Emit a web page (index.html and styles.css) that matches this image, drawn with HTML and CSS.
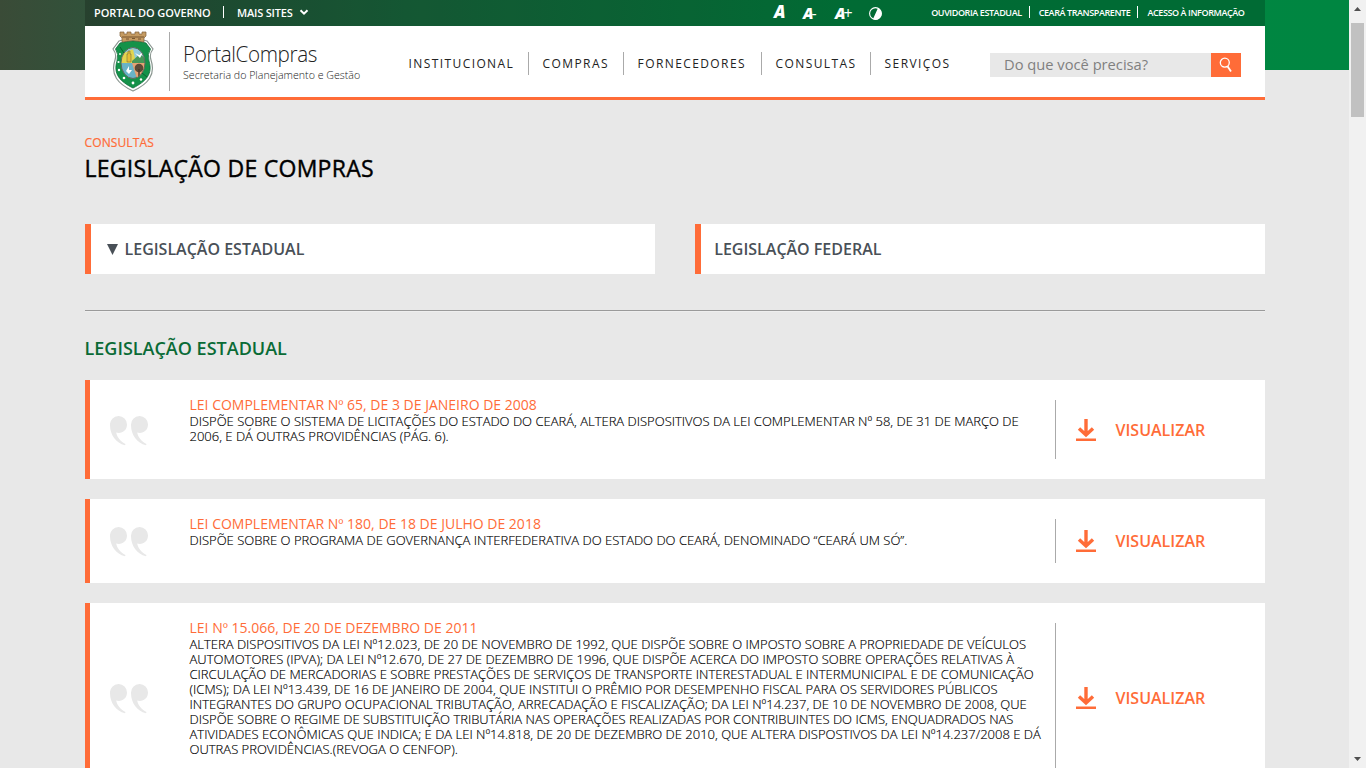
FILE: index.html
```html
<!DOCTYPE html>
<html lang="pt-BR">
<head>
<meta charset="utf-8">
<title>Legislação de Compras - PortalCompras</title>
<link rel="stylesheet" href="styles.css">
</head>
<body>
<svg class="defs" width="0" height="0">
  <symbol id="quote" viewBox="0 0 38 30"><path d="M8.500 0A8.500 8.500 0 0 0 0 9C0 19 6 27 15 29.300L15.500 28C10.500 25.500 7 21.500 6.200 16.600C12 18 17 14.500 17 8.500A8.400 8.400 0 0 0 8.500 0ZM29.500 0A8.500 8.500 0 0 0 21 9C21 19 27 27 36 29.300L36.500 28C31.500 25.500 28 21.500 27.200 16.600C33 18 38 14.500 38 8.500A8.400 8.400 0 0 0 29.500 0Z"/></symbol>
  <symbol id="download" viewBox="0 0 20 22"><path d="M10 0V16M3 9.500L10 16L17 9.500" fill="none" stroke="currentColor" stroke-width="3.400"/><path d="M0 19.500H20V22H0Z" fill="currentColor"/></symbol>
</svg>
<div class="page">
  <header class="band">
    <div class="container">
      <div class="topbar">
        <a class="gov">PORTAL DO GOVERNO</a><i class="bar bar-gov"></i><a class="sites">MAIS SITES</a>
        <svg class="chev" width="10" height="7" viewBox="0 0 10 7"><path d="M1.500 1.200L5 4.700L8.500 1.200" fill="none" stroke="#fff" stroke-width="2"/></svg>
        <div class="access">
          <span class="a1">A</span><span class="a2">A<b>-</b></span><span class="a3">A<b>+</b></span>
          <svg width="13" height="13" viewBox="0 0 13 13"><circle cx="6.500" cy="6.500" r="5.900" fill="none" stroke="#fff" stroke-width="1.100"/><path d="M9 1Q12.500 3 12.500 6.500A6 6 0 0 1 4 12.100Z" fill="#fff"/></svg>
        </div>
        <div class="links"><a class="l1">OUVIDORIA ESTADUAL</a><i class="bar"></i><a class="l2">CEARÁ TRANSPARENTE</a><i class="bar"></i><a class="l3">ACESSO À INFORMAÇÃO</a></div>
      </div>
      <div class="mainbar">
        <svg class="crest" width="42" height="62" viewBox="0 0 42 62">
          <path d="M7 10Q21 5 35 10L41 18Q37 23 39 29C44 44 36 53 21 60C6 53 -2 44 3 29Q5 23 1 18Z" fill="#fff" stroke="#8b9791" stroke-width="1.200"/>
          <path d="M8 12Q21 8 34 12L38.500 18Q35 23 37 30C41 43 34 50.500 21 57C8 50.500 1 43 5 30Q7 23 3.500 18Z" fill="#149249" stroke="#0d6b38" stroke-width=".8"/>
          <path d="M8 1H12V3H15V1H19V3H23V1H27V3H30V1H34V5L32 7V11Q21 8 10 11V7L8 5Z" fill="#c59b62" stroke="#80603a" stroke-width=".7"/>
          <path d="M10 6H32M14 8H17M20 7.500H23M26 8H29" stroke="#76552f" stroke-width="1"/>
          <clipPath id="oval"><ellipse cx="21" cy="32" rx="12" ry="15.500"/></clipPath>
          <g clip-path="url(#oval)"><path d="M8 16H34V33H8Z" fill="#91c9dc"/><path d="M8 24L21 18L24 32H8Z" fill="#e2d44e"/><path d="M20 30L28 23L34 28V32H20Z" fill="#489759"/><path d="M8 32H21L25 48H8Z" fill="#69b3c7"/><path d="M20 32H34V48H25Z" fill="#e6a273"/><path d="M15 31V23H16V20H18V23H19V31Z" fill="#e5be37" stroke="#776f42" stroke-width=".6"/><path d="M23 22L27 24L32 20L28 27Z" fill="#fff"/><path d="M14 40L17 35V39H20L17 43Z" fill="#fff"/><circle cx="27" cy="37" r="4.300" fill="#5c4936"/><path d="M27 38V46" stroke="#4b3827" stroke-width="1.500"/></g>
          <ellipse cx="21" cy="32" rx="12" ry="15.500" fill="none" stroke="#60675a" stroke-width="1"/>
          <path d="M8 16L12 22M30 42L35 46" stroke="#0c6032" stroke-width="1"/>
          <g fill="#fff"><circle cx="8" cy="23" r=".9"/><circle cx="6.500" cy="31" r="1.100"/><circle cx="7" cy="39" r="1.200"/><circle cx="12" cy="47" r="1.300"/><circle cx="21" cy="52" r="1.400"/><circle cx="29" cy="48.500" r="1.200"/></g>
        </svg>
        <i class="logo-line"></i>
        <div class="brand"><div class="brand-name">PortalCompras</div><div class="brand-sub">Secretaria do Planejamento e Gestão</div></div>
        <nav class="menu"><a class="m1">INSTITUCIONAL</a><a class="m2">COMPRAS</a><a class="m3">FORNECEDORES</a><a class="m4">CONSULTAS</a><a class="m5">SERVIÇOS</a></nav>
        <div class="search"><span>Do que você precisa?</span><div class="search-btn"><svg width="14" height="16" viewBox="0 0 14 16"><circle cx="5.800" cy="5.600" r="4.500" fill="none" stroke="#fff" stroke-width="1.300"/><path d="M8.500 9.300L12 14.600" stroke="#fff" stroke-width="1.800"/></svg></div></div>
      </div>
    </div>
  </header>
  <main class="container content">
    <div class="crumb">CONSULTAS</div>
    <h1>LEGISLAÇÃO DE COMPRAS</h1>
    <div class="tabs">
      <div class="tab"><svg width="11" height="11" viewBox="0 0 11 11"><path d="M0 0H11L5.500 11Z" fill="#495057"/></svg><span class="t1">LEGISLAÇÃO ESTADUAL</span></div>
      <div class="tab"><span class="t2">LEGISLAÇÃO FEDERAL</span></div>
    </div>
    <hr>
    <h2>LEGISLAÇÃO ESTADUAL</h2>
    <article class="card">
      <svg class="quote"><use href="#quote"/></svg>
      <div class="text"><h3>LEI COMPLEMENTAR Nº 65, DE 3 DE JANEIRO DE 2008</h3>
      <p>DISPÕE SOBRE O SISTEMA DE LICITAÇÕES DO ESTADO DO CEARÁ, ALTERA DISPOSITIVOS DA LEI COMPLEMENTAR Nº 58, DE 31 DE MARÇO DE<br>2006, E DÁ OUTRAS PROVIDÊNCIAS (PÁG. 6).</p></div>
      <a class="view"><svg class="dl"><use href="#download"/></svg><span>VISUALIZAR</span></a>
    </article>
    <article class="card">
      <svg class="quote"><use href="#quote"/></svg>
      <div class="text"><h3>LEI COMPLEMENTAR Nº 180, DE 18 DE JULHO DE 2018</h3>
      <p>DISPÕE SOBRE O PROGRAMA DE GOVERNANÇA INTERFEDERATIVA DO ESTADO DO CEARÁ, DENOMINADO “CEARÁ UM SÓ”.</p></div>
      <a class="view"><svg class="dl"><use href="#download"/></svg><span>VISUALIZAR</span></a>
    </article>
    <article class="card">
      <svg class="quote"><use href="#quote"/></svg>
      <div class="text"><h3>LEI Nº 15.066, DE 20 DE DEZEMBRO DE 2011</h3>
      <p>ALTERA DISPOSITIVOS DA LEI Nº12.023, DE 20 DE NOVEMBRO DE 1992, QUE DISPÕE SOBRE O IMPOSTO SOBRE A PROPRIEDADE DE VEÍCULOS<br>AUTOMOTORES (IPVA); DA LEI Nº12.670, DE 27 DE DEZEMBRO DE 1996, QUE DISPÕE ACERCA DO IMPOSTO SOBRE OPERAÇÕES RELATIVAS À<br>CIRCULAÇÃO DE MERCADORIAS E SOBRE PRESTAÇÕES DE SERVIÇOS DE TRANSPORTE INTERESTADUAL E INTERMUNICIPAL E DE COMUNICAÇÃO<br>(ICMS); DA LEI Nº13.439, DE 16 DE JANEIRO DE 2004, QUE INSTITUI O PRÊMIO POR DESEMPENHO FISCAL PARA OS SERVIDORES PÚBLICOS<br>INTEGRANTES DO GRUPO OCUPACIONAL TRIBUTAÇÃO, ARRECADAÇÃO E FISCALIZAÇÃO; DA LEI Nº14.237, DE 10 DE NOVEMBRO DE 2008, QUE<br>DISPÕE SOBRE O REGIME DE SUBSTITUIÇÃO TRIBUTÁRIA NAS OPERAÇÕES REALIZADAS POR CONTRIBUINTES DO ICMS, ENQUADRADOS NAS<br>ATIVIDADES ECONÔMICAS QUE INDICA; E DA LEI Nº14.818, DE 20 DE DEZEMBRO DE 2010, QUE ALTERA DISPOSTIVOS DA LEI Nº14.237/2008 E DÁ<br>OUTRAS PROVIDÊNCIAS.(REVOGA O CENFOP).</p></div>
      <a class="view"><svg class="dl"><use href="#download"/></svg><span>VISUALIZAR</span></a>
    </article>
  </main>
</div>
<aside class="scroll">
  <svg width="7" height="4" viewBox="0 0 7 4"><path d="M0 4L3.500 0L7 4Z" fill="#505050"/></svg>
  <div class="thumb"></div>
  <svg class="down" width="7" height="4" viewBox="0 0 7 4"><path d="M0 0H7L3.500 4Z" fill="#505050"/></svg>
</aside>
</body>
</html>
```
FILE: styles.css
```css
* { box-sizing: border-box; margin: 0; padding: 0; }
html, body { height: 768px; overflow: hidden; }
body { display: flex; font-family: "Open Sans", sans-serif; background: #e8e8e8; white-space: nowrap; }
.defs { position: absolute; }
.page { width: 1349px; height: 768px; overflow: hidden; }
.container { width: 1180px; margin-left: 84.5px; }
.band { height: 70px; background: linear-gradient(90deg, #3a4b37 0, #29583d 12%, #1a6d40 30%, #028641 62%, #008641 100%); }
.topbar { display: flex; align-items: center; height: 26px; padding: 0 20px 2px 9.5px; background: rgba(0,0,0,.2); color: #fff; font-size: 11px; font-weight: 600; }
.bar { width: 1px; height: 12px; background: #fff; }
.bar-gov { margin: 0 13px 0 12px; }
.gov { width: 117px; letter-spacing: -.1px; }
.sites { width: 57px; letter-spacing: -.2px; }
.chev { margin-left: 5px; }
.access { display: flex; align-items: center; margin-left: 465px; height: 24px; font-size: 17px; font-weight: 800; font-style: italic; line-height: 24px; }
.access b { font-weight: 400; font-style: normal; font-size: 16px; margin-left: -2px; }
.a1 { width: 29px; }
.a2, .a3 { padding-top: 2px; font-size: 15.5px; }
.a2 { width: 32px; }
.a3 { width: 34px; }
.access svg { margin-top: 3px; }
.links { display: flex; align-items: center; margin-left: auto; font-size: 9px; letter-spacing: -.4px; }
.links .bar { margin: 0 9px 0 7px; }
.mainbar { display: flex; height: 74px; background: #fff; border-bottom: 3px solid #ff6c38; }
.crest { margin: 5px 0 0 27.5px; }
.logo-line { width: 1px; height: 59px; margin: 6px 0 0 15px; background: #aaa; }
.brand { width: 225px; padding: 15px 0 0 12.7px; color: #222; font-weight: 300; }
.brand-name { font-size: 22.5px; line-height: 25px; letter-spacing: -.4px; transform: scaleX(.918); transform-origin: left; }
.brand-sub { font-size: 11.5px; line-height: 17px; transform: scaleX(.925); transform-origin: left; }
.menu { display: flex; height: 23px; margin-top: 26px; line-height: 23px; font-size: 12px; letter-spacing: 1.4px; color: #222; }
.menu a { padding-left: 13.6px; border-right: 1px solid #aaa; }
.m1 { width: 134px; }
.m2 { width: 95px; }
.m3 { width: 138px; }
.m4 { width: 109px; }
.menu .m5 { border: 0; }
.search { display: flex; width: 251px; height: 24px; margin: 27px 24px 0 auto; background: #e8e8e8; color: #808080; font-size: 14.7px; line-height: 23px; padding-left: 14.5px; }
.search-btn { width: 30px; margin-left: auto; background: #ff6c38; padding: 4px 0 0 8px; line-height: 0; }
.content { padding-top: 64px; }
.crumb { font-size: 12px; line-height: 18px; letter-spacing: .12px; color: #ff6c38; -webkit-text-stroke: .2px #ff6c38; }
h1 { font-size: 23px; line-height: 32px; font-weight: 400; letter-spacing: .27px; -webkit-text-stroke: .4px #000; color: #000; }
.tabs { display: grid; grid-template-columns: 570px 570px; gap: 40px; margin-top: 40px; }
.tab { display: flex; align-items: center; height: 50px; padding-left: 13px; border-left: 6px solid #ff6c38; background: #fff; font-size: 16px; font-weight: 600; color: #495057; }
.tab svg { margin: 0 7px 0 3px; }
.t2 { padding-left: .7px; }
hr { height: 2px; margin-top: 36px; border: 0; border-top: 1px solid #9a9a9a; border-bottom: 1px solid #eee; }
h2 { margin: 23px 0 19px; font-size: 18px; line-height: 26px; font-weight: 600; color: #0a6b36; }
.card { display: flex; align-items: center; border-left: 5px solid #ff6c38; background: #fff; margin-bottom: 20px; }
.quote { width: 38px; height: 30px; margin-left: 20.5px; fill: #e8e8e8; margin-top: 2px; }
.text { width: 865px; margin-left: 41.5px; padding: 16px 0 35px; }
h3 { font-size: 14px; line-height: 17px; font-weight: 400; color: #ff6c38; }
.text p { margin-top: 1px; font-size: 13px; line-height: 15px; font-weight: 300; color: #000; -webkit-text-stroke: .15px #000; }
.view { display: flex; align-items: center; align-self: stretch; margin: 20px 0; padding-left: 20.5px; border-left: 1px solid #aaa; color: #ff6c38; font-size: 16px; font-weight: 600; }
.dl { width: 20px; height: 22px; margin-right: 19.5px; }
.scroll { display: flex; flex-direction: column; align-items: center; width: 17px; height: 768px; padding: 7px 0; background: #f1f1f1; }
.thumb { width: 13px; height: 94px; margin-top: 12px; background: #c1c1c1; }
.down { margin-top: auto; }
```
